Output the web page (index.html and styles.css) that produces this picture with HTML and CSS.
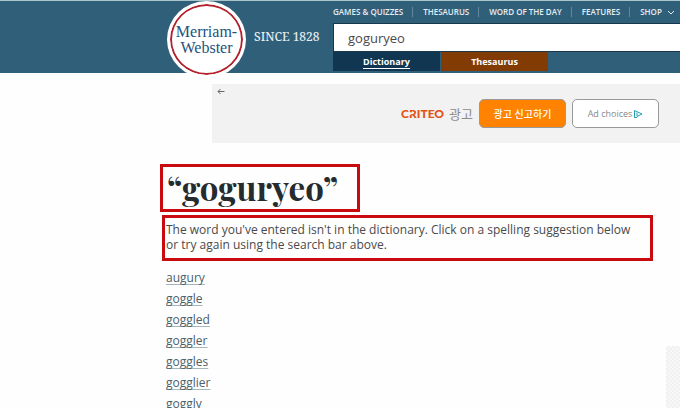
FILE: index.html
```html
<!DOCTYPE html>
<html lang="en">
<head>
<meta charset="utf-8">
<title>goguryeo - Merriam-Webster</title>
<link rel="stylesheet" href="styles.css">
</head>
<body>
<header class="header">
  <a class="logo" href="#"><span>Merriam-</span><span>Webster</span></a>
  <span class="since">SINCE 1828</span>
  <div class="tools">
    <nav class="menu">
      <a href="#">GAMES &amp; QUIZZES</a>
      <a href="#">THESAURUS</a>
      <a href="#">WORD OF THE DAY</a>
      <a href="#">FEATURES</a>
      <a href="#">SHOP <svg class="chevron" viewBox="0 0 8 5"><path d="M1 1l3 3 3-3"/></svg></a>
    </nav>
    <input class="search" type="text" value="goguryeo" aria-label="Search">
    <div class="tabs">
      <button class="tab tab-dictionary" type="button"><span>Dictionary</span></button>
      <button class="tab tab-thesaurus" type="button"><span>Thesaurus</span></button>
    </div>
  </div>
</header>
<aside class="ad">
  <button class="back" type="button" aria-label="Back"><svg viewBox="0 0 8 7"><path d="M7.500 3.500H1M3.500 1L1 3.500 3.500 6"/></svg></button>
  <div class="ad-row">
    <span class="criteo">C<span class="cut">R</span>ITEO</span>
    <span class="ad-label">광고</span>
    <button class="ad-button report" type="button">광고 신고하기</button>
    <button class="ad-button choices" type="button">Ad choices<svg viewBox="0 0 10 10"><path d="M4 8.500H1.500v-7L9 5 4 7.500V3.500"/></svg></button>
  </div>
</aside>
<div class="content">
  <main class="result">
    <h1 class="word">“goguryeo”</h1>
    <p class="message">The word you've entered isn't in the dictionary. Click on a spelling suggestion below or try again using the search bar above.</p>
    <ul class="suggestions">
      <li><a href="#">augury</a></li>
      <li><a href="#">goggle</a></li>
      <li><a href="#">goggled</a></li>
      <li><a href="#">goggler</a></li>
      <li><a href="#">goggles</a></li>
      <li><a href="#">gogglier</a></li>
      <li><a href="#">goggly</a></li>
    </ul>
  </main>
  <aside class="side"></aside>
</div>
</body>
</html>
```
FILE: styles.css
```css
* { box-sizing: border-box; }
body {
  margin: 0;
  height: 100vh;
  overflow: hidden;
  background: #fefefe;
  font-family: "Open Sans", "Noto Sans CJK KR", sans-serif;
  color: #4a4a4a;
}
a { color: inherit; text-decoration: none; }
button { font: inherit; margin: 0; padding: 0; border: 0; }
.header {
  display: flex;
  align-items: flex-start;
  height: 73px;
  padding-left: 167px;
  border-top: 1px solid #a9c4ca;
  background: #305f7a;
  color: #e6edf0;
}
.logo {
  display: flex;
  flex-direction: column;
  align-items: center;
  justify-content: center;
  flex: none;
  width: 79px;
  height: 77px;
  border: 3px solid #fff;
  border-radius: 50%;
  background: #fff;
  box-shadow: inset 0 0 0 2px #b3202c;
  color: #23527c;
  font: 16px/16px "Liberation Serif", serif;
}
.since {
  width: 87px;
  padding: 28px 0 0 8px;
  font: 500 12px/16px "Noto Serif", "Liberation Serif", serif;
  white-space: nowrap;
}
.tools { flex: 1; min-width: 0; }
.menu {
  display: flex;
  height: 22px;
  align-items: center;
  font-size: 8px;
  font-weight: 600;
  line-height: 10px;
  white-space: nowrap;
}
.menu a + a { margin-left: 9px; padding-left: 10px; border-left: 1px solid #6188a0; }
.chevron { width: 8px; height: 5px; margin-left: 3px; fill: none; stroke: #e6edf0; }
.search {
  display: block;
  width: 100%;
  height: 29px;
  padding: 0 14px;
  border: 1px solid #17384f;
  border-right: 0;
  border-radius: 0;
  background: #fff;
  color: #4a4a4a;
  font: 13px "Open Sans", sans-serif;
}
.tabs { display: flex; gap: 1px; }
.tab {
  width: 107px;
  height: 19px;
  color: #fff;
  font-size: 9px;
  font-weight: 700;
  line-height: 12px;
}
.tab-dictionary { background: #113651; }
.tab-dictionary span { border-bottom: 1px solid #fff; }
.tab-thesaurus { background: #833b04; }
.ad {
  position: relative;
  height: 59px;
  margin: 11px 0 0 212px;
  padding: 15px 21px 0 0;
  background: #f2f2f2;
}
.back { position: absolute; left: 5px; top: 4px; width: 8px; height: 7px; background: none; }
.back svg { display: block; fill: none; stroke: #666; }
.ad-row { display: flex; align-items: center; justify-content: flex-end; }
.criteo { color: #e35315; font: 900 12px/16px Lato, sans-serif; }
.cut { display: inline-block; clip-path: polygon(0 0, 100% 0, 100% 100%, 0 100%, 0 62%, 45% 52%, 45% 42%, 0 42%); }
.ad-label { margin: 0 6px 0 5px; color: #8b8b8b; font-size: 13px; line-height: 20px; }
.ad-button {
  display: flex;
  align-items: center;
  justify-content: center;
  width: 87px;
  height: 29px;
  border: 1px solid #999;
  border-radius: 5px;
  font-size: 9px;
}
.report { background: #ff8200; color: #fff; font-size: 10px; font-weight: 500; }
.choices { margin-left: 6px; background: #fff; color: #888; }
.choices svg { width: 10px; height: 10px; margin-left: 1px; fill: none; stroke: #24a0b5; }
.content { display: flex; justify-content: space-between; padding-left: 160px; }
.result { flex: 0 1 493px; padding-top: 21px; }
.word {
  width: 200px;
  height: 48px;
  margin: 0;
  padding-left: 4px;
  border: 3px solid #c90a0e;
  color: #252b2f;
  font: 700 33px/40px "Playfair Display", "Liberation Serif", serif;
}
.message {
  height: 46px;
  margin: 3px 0 0 2px;
  padding: 4px 12px 0 1px;
  border: 3px solid #c90a0e;
  font-size: 12px;
  line-height: 15px;
}
.suggestions {
  margin: 6px 0 0;
  padding: 0 0 0 6px;
  list-style: none;
  color: #4b6069;
  font-size: 12px;
  line-height: 21px;
}
.suggestions a { text-decoration: underline 1px #a5b5bb; text-underline-offset: 2px; text-decoration-skip-ink: none; }
.side {
  width: 14px;
  height: 80px;
  margin-top: 203px;
  background: repeating-conic-gradient(#f0f0f0 0 25%, #f8f8f8 0 50%) 0 0 / 4px 4px;
}
```
